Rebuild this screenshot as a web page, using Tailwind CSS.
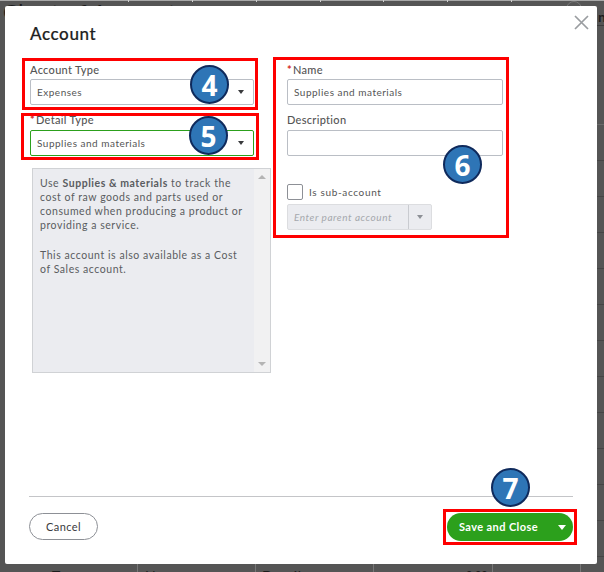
<!doctype html>
<html><head><meta charset="utf-8"><script src="https://cdn.jsdelivr.net/npm/@tailwindcss/browser@4"></script></head>
<body class="m-0">
<div class="relative w-[604px] h-[572px] overflow-hidden bg-[#555555] font-['Lato','Open_Sans',sans-serif] pl-[5px] pt-[6px]">
  <!-- page behind the overlay -->
  <div class="absolute left-0 top-0 w-full h-px bg-[#a8a8a8]"></div>
  <div class="absolute left-[128px] top-0 w-px h-[2px] bg-[#cfcfcf]"></div>
  <div class="absolute left-[192px] top-0 w-px h-[2px] bg-[#cfcfcf]"></div>
  <div class="absolute left-[256px] top-0 w-px h-[2px] bg-[#cfcfcf]"></div>
  <div class="absolute left-[320px] top-0 w-px h-[2px] bg-[#cfcfcf]"></div>
  <div class="absolute left-[383px] top-0 w-px h-[2px] bg-[#cfcfcf]"></div>
  <div class="absolute left-[447px] top-0 w-px h-[2px] bg-[#cfcfcf]"></div>
  <div class="absolute left-[511px] top-0 w-px h-[2px] bg-[#cfcfcf]"></div>
  <div class="absolute left-[566px] top-[1px] w-[16px] h-[16px] rounded-full border border-[#777]"></div>
  <div class="absolute left-[3px] top-[-1px] text-[22px] leading-[26px] text-[#1c1c1c] tracking-[0.6px]">Chart of Accounts</div>
  <div class="absolute left-[598px] top-[9px] text-[14px] leading-[16px] font-bold text-[#1c1c1c]">n</div>
  <div class="absolute left-[597px] top-[25px] w-[7px] h-px bg-[#3c3c3c]"></div>
  <div class="absolute left-[597px] top-[124px] w-[7px] h-px bg-[#6a6a6a]"></div>
  <div class="absolute left-[597px] top-[160px] w-[7px] h-px bg-[#454545]"></div>
  <div class="absolute left-[597px] top-[196px] w-[7px] h-px bg-[#454545]"></div>
  <div class="absolute left-[597px] top-[232px] w-[7px] h-px bg-[#454545]"></div>
  <div class="absolute left-[597px] top-[268px] w-[7px] h-px bg-[#454545]"></div>
  <div class="absolute left-[597px] top-[304px] w-[7px] h-px bg-[#454545]"></div>
  <div class="absolute left-[597px] top-[340px] w-[7px] h-px bg-[#454545]"></div>
  <div class="absolute left-[597px] top-[376px] w-[7px] h-px bg-[#454545]"></div>
  <div class="absolute left-[597px] top-[412px] w-[7px] h-px bg-[#454545]"></div>
  <div class="absolute left-[597px] top-[448px] w-[7px] h-px bg-[#454545]"></div>
  <div class="absolute left-[597px] top-[484px] w-[7px] h-px bg-[#454545]"></div>
  <div class="absolute left-[597px] top-[520px] w-[7px] h-px bg-[#454545]"></div>
  <div class="absolute left-[597px] top-[556px] w-[7px] h-px bg-[#454545]"></div>
  <div class="absolute left-[52px] top-[568px] text-[14px] leading-[16px] text-[#1c1c1c] tracking-[0.5px]">Type account</div>
  <div class="absolute left-[145px] top-[568px] text-[14px] leading-[16px] text-[#1c1c1c] tracking-[0.5px]">Name account</div>
  <div class="absolute left-[262px] top-[568px] text-[14px] leading-[16px] text-[#1c1c1c] tracking-[0.5px]">Detail type</div>
  <div class="absolute left-[466px] top-[568px] text-[11px] leading-[14px] text-[#1c1c1c]">0.00</div>
  <div class="absolute left-[137px] top-[564px] w-px h-[8px] bg-[#777]"></div>
  <div class="absolute left-[255px] top-[564px] w-px h-[8px] bg-[#777]"></div>
  <div class="absolute left-[373px] top-[564px] w-px h-[8px] bg-[#777]"></div>
  <div class="absolute left-[492px] top-[564px] w-px h-[8px] bg-[#777]"></div>
  <div class="absolute left-[580px] top-[564px] w-px h-[8px] bg-[#777]"></div>

  <!-- modal -->
  <div class="relative w-[592px] h-[558px] bg-white rounded-[2px] text-[#393a3d]">
    <div class="flex h-[52px] items-start justify-between pl-[25px] pr-[8px]">
      <h1 class="mt-[17px] text-[17px] leading-[22px] font-medium tracking-[0.6px] text-[#1f1f1f] [-webkit-text-stroke:0.2px_#1f1f1f]">Account</h1>
      <svg class="mt-[9px]" width="15" height="15" viewBox="0 0 15 15" fill="none" stroke="#9a9da1" stroke-width="1.7"><path d="M1 1L14 14M14 1L1 14"/></svg>
    </div>

    <div class="flex h-[438px] pl-[25px]">
      <div class="w-[224px] shrink-0">
        <div class="text-[11px] leading-[14px] h-[21px] pt-[5px] tracking-[0.3px] font-medium text-[#555]">Account Type</div>
        <div class="flex items-center justify-between h-[26px] border border-[#babec5] rounded-[2px] pl-[6px] pr-[9px] text-[10px] tracking-[0.5px] text-[#555]">
          <span>Expenses</span>
          <span class="w-0 h-0 border-x-[3.5px] border-x-transparent border-t-[4px] border-t-[#393a3d]"></span>
        </div>
        <div class="text-[11px] leading-[14px] h-[25px] pt-[8px] tracking-[0.3px] font-medium text-[#555]"><span class="text-[#d52b1e] mr-[1px] font-bold">*</span>Detail Type</div>
        <div class="flex items-center justify-between h-[26px] border border-[#2ca01c] rounded-[2px] pl-[6px] pr-[9px] text-[10px] tracking-[0.5px] text-[#555]">
          <span>Supplies and materials</span>
          <span class="w-0 h-0 border-x-[3.5px] border-x-transparent border-t-[4px] border-t-[#393a3d]"></span>
        </div>
        <div class="relative flex ml-[2px] mt-[12px] w-[239px] h-[205px] border border-[#d0d2d5] bg-[#ebecf0] text-[10.5px] leading-[14px] tracking-[0.55px] text-[#5a5c60]">
          <div class="w-[221px] pl-[7px] pr-[8px] pt-[7px]">
            <p>Use <b class="font-bold">Supplies &amp; materials</b> to track the cost of raw goods and parts used or consumed when producing a product or providing a service.</p>
            <p class="mt-[16px]">This account is also available as a Cost<br>of Sales account.</p>
          </div>
          <div class="flex flex-1 flex-col items-center justify-between bg-[#f1f1f2] py-[6px]">
            <span class="w-0 h-0 border-x-[4px] border-x-transparent border-b-[4px] border-b-[#b4b4b4]"></span>
            <span class="w-0 h-0 border-x-[4px] border-x-transparent border-t-[4px] border-t-[#b4b4b4]"></span>
          </div>
        </div>
      </div>

      <div class="ml-[33px] w-[216px] shrink-0">
        <div class="text-[11px] leading-[14px] h-[21px] pt-[5px] tracking-[0.3px] font-medium text-[#555]"><span class="text-[#d52b1e] mr-[1px] font-bold">*</span>Name</div>
        <div class="flex items-center h-[26px] border border-[#babec5] rounded-[2px] pl-[6px] text-[10px] tracking-[0.5px] text-[#555]">Supplies and materials</div>
        <div class="text-[11px] leading-[14px] h-[25px] pt-[8px] tracking-[0.3px] font-medium text-[#555]">Description</div>
        <div class="h-[26px] border border-[#babec5] rounded-[2px]"></div>
        <label class="flex items-center gap-[6px] mt-[28px] h-[16px] text-[10px] tracking-[0.65px] text-[#555]">
          <span class="w-[16px] h-[16px] border border-[#8d9096] rounded-[2px]"></span>Is sub-account
        </label>
        <div class="flex mt-[4px] w-[145px] h-[26px] border border-[#dcdde0] bg-[#ebecf0] rounded-[2px] text-[10px] italic tracking-[0.55px] text-[#a5a8ad]">
          <span class="flex items-center w-[121px] pl-[6px] border-r border-[#c9cbd0]">Enter parent account</span>
          <span class="flex flex-1 items-center justify-center"><span class="w-0 h-0 border-x-[3.5px] border-x-transparent border-t-[4px] border-t-[#8d9096]"></span></span>
        </div>
      </div>
    </div>

    <div class="ml-[24px] mr-[24px] border-t border-[#c4c5c8]"></div>
    <div class="flex items-start justify-between ml-[24px] mr-[24px] mt-[16px]">
      <button class="w-[69px] h-[27px] pt-[1px] border border-[#8d9096] rounded-full text-[11px] tracking-[0.4px] text-[#393a3d]">Cancel</button>
      <div class="flex items-center w-[126px] h-[28px] pt-[1px] rounded-full bg-[#2ca01c] text-white text-[11px] font-bold tracking-[0.4px]">
        <span class="w-[105px] pl-[12px]">Save and Close</span>
        <span class="ml-[6px] w-0 h-0 border-x-[4px] border-x-transparent border-t-[5px] border-t-white"></span>
      </div>
    </div>
  </div>

  <!-- annotation boxes -->
  <div class="absolute left-[22px] top-[58px] w-[236px] h-[52px] border-[3px] border-[#fe0000]"></div>
  <div class="absolute left-[21px] top-[113px] w-[238px] h-[47px] border-[3px] border-[#fe0000]"></div>
  <div class="absolute left-[273px] top-[57px] w-[236px] h-[181px] border-[3px] border-[#fe0000]"></div>
  <div class="absolute left-[443px] top-[509px] w-[134px] h-[36px] border-[3px] border-[#fe0000]"></div>
  <!-- numbered badges -->
  <div class="absolute left-[190px] top-[65px] flex items-center justify-center w-[39px] h-[39px] rounded-full bg-[#2e75b6] border-2 border-[#0f2a5c] text-white text-[28px] font-bold leading-none font-['Open_Sans',sans-serif]">4</div>
  <div class="absolute left-[189px] top-[116px] flex items-center justify-center w-[39px] h-[39px] rounded-full bg-[#2e75b6] border-2 border-[#0f2a5c] text-white text-[28px] font-bold leading-none font-['Open_Sans',sans-serif]">5</div>
  <div class="absolute left-[443px] top-[145px] flex items-center justify-center w-[39px] h-[39px] rounded-full bg-[#2e75b6] border-2 border-[#0f2a5c] text-white text-[28px] font-bold leading-none font-['Open_Sans',sans-serif]">6</div>
  <div class="absolute left-[491px] top-[468px] flex items-center justify-center w-[39px] h-[39px] rounded-full bg-[#2e75b6] border-2 border-[#0f2a5c] text-white text-[28px] font-bold leading-none font-['Open_Sans',sans-serif]">7</div>
</div>
</body></html>
